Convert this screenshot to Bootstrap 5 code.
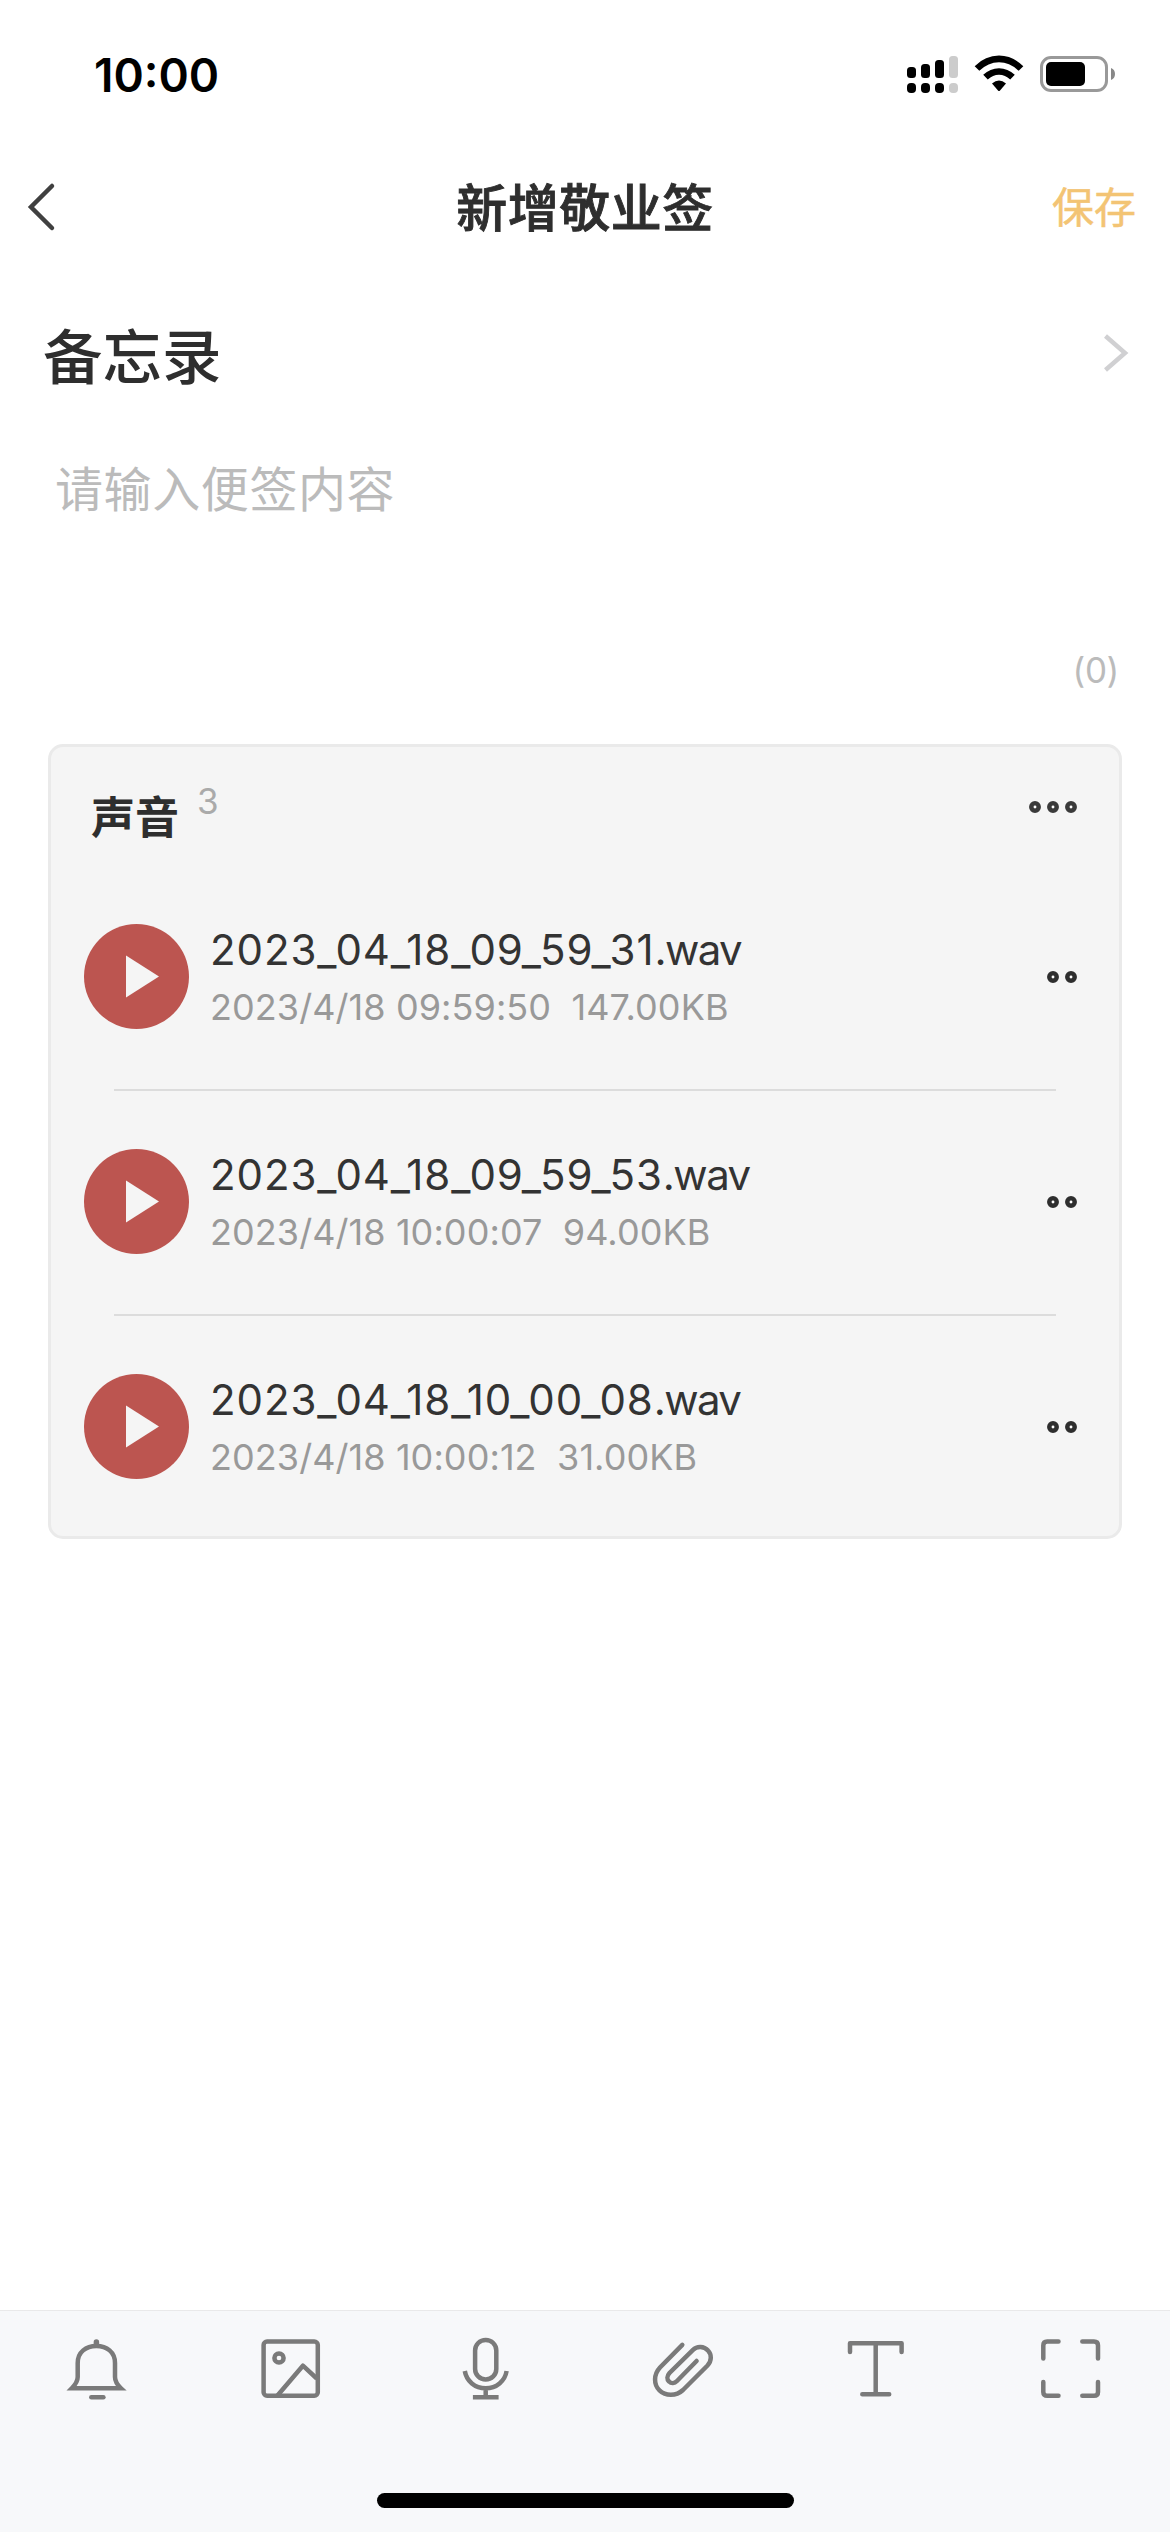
<!DOCTYPE html>
<html lang="zh-CN">
<head>
<meta charset="utf-8">
<meta name="viewport" content="width=device-width, initial-scale=1">
<title>新增敬业签</title>
<link href="https://cdn.jsdelivr.net/npm/bootstrap@5.3.0/dist/css/bootstrap.min.css" rel="stylesheet">
<style>
  body { font-family: Inter, "Noto Sans CJK SC", sans-serif; color: #2e2e2e; }
  .screen { width: 1170px; height: 2532px; line-height: 1; }
  .status-bar { height: 150px; padding: 55px 55px 0 94px; }
  .clock { font-size: 46px; font-weight: 600; line-height: 40px; color: #000; }
  .nav-bar { height: 114px; padding: 0 34px 0 26px; }
  .nav-side { width: 200px; }
  .nav-heading { font-size: 51px; font-weight: 500; line-height: 60px; letter-spacing: .5px; padding-top: 3px; margin-left: 8px; -webkit-text-stroke: .9px #2e2e2e; }
  .save-link { font-size: 42px; color: #f3c474; text-decoration: none; line-height: 50px; -webkit-text-stroke: .5px #f3c474; }
  .save-wrap { padding-top: 2px; }
  .folder-row { height: 178px; padding: 0 40px 0 43px; }
  .folder-name { font-size: 59.5px; font-weight: 500; line-height: 70px; padding-top: 7px; }
  .editor { height: 302px; padding: 18px 51px 0 55px; }
  .hint { font-size: 48px; line-height: 60px; color: #bbb; letter-spacing: .6px; }
  .counter { font-size: 35px; line-height: 40px; color: #bbb; letter-spacing: -.4px; margin-bottom: 54px; }
  .audio-card { margin: 0 48px; height: 795px; background: #f5f5f5; border: 3px solid #eaeaea; border-radius: 15px; }
  .audio-head { height: 117px; padding: 42px 39px 0 40px; }
  .audio-title { font-size: 44px; font-weight: 700; line-height: 54px; padding-top: 2px; }
  .audio-count { font-size: 35px; line-height: 36px; color: #aaa; margin-left: 18px; margin-top: -6px; }
  .audio-row { height: 225px; padding: 0 39px 0 33px; }
  .audio-row + .audio-row { background: linear-gradient(#dcdcdc, #dcdcdc) 63px 0 / 942px 2px no-repeat; }
  .file-name { font-size: 42px; line-height: 50px; color: #333; letter-spacing: .9px; }
  .file-ext { letter-spacing: -1.6px; }
  .file-meta { font-size: 36px; line-height: 44px; color: #999; margin-top: 10px; white-space: pre; letter-spacing: .08px; }
  .file-text { margin-left: 21px; }
  .tool-bar { height: 222px; background: #f7f8fa; border-top: 1px solid #e9e9ea; padding: 24px 0; }
  .tool-bar svg { fill: none; stroke: #7a7a7a; stroke-width: 4.5; }
  .home-bar { width: 417px; height: 15px; border-radius: 8px; background: #000; }
  svg { display: block; flex: none; }
</style>
</head>
<body class="bg-white">
<div class="screen d-flex flex-column">
  <header class="status-bar d-flex justify-content-between align-items-start">
    <div class="clock">10:00</div>
    <svg width="208" height="40" viewBox="907 55 208 40">
      <g><rect x="907" y="67" width="9" height="11" rx="3.5"/><rect x="921" y="64" width="9" height="14" rx="3.5"/><rect x="935" y="60" width="9" height="18" rx="3.5"/>
      <rect x="907" y="83" width="9" height="10" rx="4"/><rect x="921" y="83" width="9" height="10" rx="4"/><rect x="935" y="83" width="9" height="10" rx="4"/></g>
      <g fill="#ccc"><rect x="949" y="56" width="9" height="22" rx="3.5"/><rect x="949" y="83" width="9" height="10" rx="4"/></g>
      <path fill="none" stroke="#000" stroke-width="6.6" d="M977 68.500C990 55.700 1008 55.700 1021 68.500M985.500 77.200C993.500 69.500 1004.500 69.500 1012.500 77.200"/>
      <path d="M992 83.500Q999 77.500 1006 83.500L1000 90.400Q999 91.500 998 90.400Z"/>
      <rect x="1041.500" y="57.500" width="65" height="33" rx="9.500" fill="none" stroke="#999" stroke-width="3"/>
      <rect x="1046" y="62" width="39" height="24" rx="5"/>
      <path fill="#888" d="M1111 68Q1115 69.500 1115 74T1111 80Z"/>
    </svg>
  </header>

  <nav class="nav-bar d-flex align-items-center justify-content-between">
    <div class="nav-side"><svg width="30" height="50" viewBox="0 0 30 50"><path d="M26 4L5 25L26 46" fill="none" stroke="#404040" stroke-width="4.500" stroke-linecap="round"/></svg></div>
    <div class="nav-heading">新增敬业签</div>
    <div class="nav-side save-wrap text-end"><a class="save-link" href="#">保存</a></div>
  </nav>

  <section class="folder-row d-flex align-items-center justify-content-between">
    <div class="folder-name">备忘录</div>
    <svg width="28" height="40" viewBox="0 0 28 40"><path d="M3.500 3L23 20L3.500 37" fill="none" stroke="#d0d0d2" stroke-width="4.500"/></svg>
  </section>

  <section class="editor d-flex flex-column justify-content-between">
    <div class="hint">请输入便签内容</div>
    <div class="counter text-end">(0)</div>
  </section>

  <section class="audio-card">
    <div class="audio-head d-flex align-items-start">
      <div class="audio-title">声音</div>
      <div class="audio-count">3</div>
      <svg class="ms-auto mt-2" width="54" height="20" viewBox="0 0 54 20" fill="#fff" stroke="#3a3a3a" stroke-width="4.500"><circle cx="9" cy="10" r="3.700"/><circle cx="27" cy="10" r="3.700"/><circle cx="45" cy="10" r="3.700"/></svg>
    </div>
    <div class="audio-row d-flex align-items-center">
      <svg width="105" height="105" viewBox="0 0 105 105"><circle cx="52.500" cy="52.500" r="52.500" fill="#bc5550"/><path d="M42 31.500L75 52.500L42 73.500Z" fill="#f5f5f5"/></svg>
      <div class="file-text"><div class="file-name">2023_04_18_09_59_31<span class="file-ext">.wav</span></div><div class="file-meta">2023/4/18 09:59:50  147.00KB</div></div>
      <svg class="ms-auto" width="36" height="20" viewBox="0 0 36 20" fill="#fff" stroke="#2e2e2e" stroke-width="4.500"><circle cx="9" cy="10" r="3.700"/><circle cx="27" cy="10" r="3.700"/></svg>
    </div>
    <div class="audio-row d-flex align-items-center">
      <svg width="105" height="105" viewBox="0 0 105 105"><circle cx="52.500" cy="52.500" r="52.500" fill="#bc5550"/><path d="M42 31.500L75 52.500L42 73.500Z" fill="#f5f5f5"/></svg>
      <div class="file-text"><div class="file-name">2023_04_18_09_59_53<span class="file-ext">.wav</span></div><div class="file-meta">2023/4/18 10:00:07  94.00KB</div></div>
      <svg class="ms-auto" width="36" height="20" viewBox="0 0 36 20" fill="#fff" stroke="#2e2e2e" stroke-width="4.500"><circle cx="9" cy="10" r="3.700"/><circle cx="27" cy="10" r="3.700"/></svg>
    </div>
    <div class="audio-row d-flex align-items-center">
      <svg width="105" height="105" viewBox="0 0 105 105"><circle cx="52.500" cy="52.500" r="52.500" fill="#bc5550"/><path d="M42 31.500L75 52.500L42 73.500Z" fill="#f5f5f5"/></svg>
      <div class="file-text"><div class="file-name">2023_04_18_10_00_08<span class="file-ext">.wav</span></div><div class="file-meta">2023/4/18 10:00:12  31.00KB</div></div>
      <svg class="ms-auto" width="36" height="20" viewBox="0 0 36 20" fill="#fff" stroke="#2e2e2e" stroke-width="4.500"><circle cx="9" cy="10" r="3.700"/><circle cx="27" cy="10" r="3.700"/></svg>
    </div>
  </section>

  <footer class="tool-bar mt-auto d-flex flex-column justify-content-between align-items-center">
    <div class="row g-0 w-100">
      <div class="col-2 d-flex justify-content-center">
        <svg width="71" height="71" viewBox="0 0 71 71"><path d="M15.700 28C15.700 17 24 11 34.400 11S53 17 53 28V42C53 46 55.500 50 59 53.300H9.800C13 50 15.700 46 15.700 42Z"/><path stroke-width="5.500" stroke-linecap="round" d="M34.400 7V10"/><path stroke-linecap="round" d="M29.300 62.300H41.400"/></svg>
      </div>
      <div class="col-2 d-flex justify-content-center">
        <svg width="71" height="71" viewBox="0 0 71 71"><rect x="6.600" y="6.600" width="54.200" height="54.200" rx="3.500"/><circle cx="22" cy="23" r="4.600"/><path stroke-linejoin="round" d="M20.500 60.500L45.900 30.700L59.800 43.500"/></svg>
      </div>
      <div class="col-2 d-flex justify-content-center">
        <svg width="71" height="71" viewBox="0 0 71 71"><rect x="23.100" y="4.900" width="21.200" height="39.600" rx="10.600"/><path d="M12.800 36C14.500 46 23 53.300 33.700 53.300S53 46 54.600 36M33.700 53V62M20.900 62.300H46.600"/></svg>
      </div>
      <div class="col-2 d-flex justify-content-center">
        <svg width="71" height="71" viewBox="0 0 71 71"><path stroke-linecap="round" d="M35.300 9.800L13 32.500C6.500 39.500 6.500 49.500 12.500 55.400C18.500 61.300 29 61.500 36 55L60.500 30.500C64.800 26 64.800 19.500 61 15.500C57 11 50 10.800 46 14.800L22.500 38C19.800 41 19.800 44.500 22 46.500C24.300 48.800 27.500 48.500 30 46L49.600 26"/></svg>
      </div>
      <div class="col-2 d-flex justify-content-center">
        <svg width="71" height="71" viewBox="0 0 71 71"><path stroke-linecap="round" stroke-linejoin="round" d="M8 17V8.300H59.600V17M33.700 8.300V59.300M20.300 59.300H47.200"/></svg>
      </div>
      <div class="col-2 d-flex justify-content-center">
        <svg width="71" height="71" viewBox="0 0 71 71"><path stroke-linecap="round" d="M6.300 23.500V10.500Q6.300 6.600 10.200 6.600H21.500M45.300 6.600H57Q61 6.600 61 10.500V23.500M61 47V57Q61 60.800 57 60.800H45.300M21.500 60.800H10.200Q6.300 60.800 6.300 57V47"/></svg>
      </div>
    </div>
    <div class="home-bar"></div>
  </footer>
</div>
<script src="https://cdn.jsdelivr.net/npm/bootstrap@5.3.0/dist/js/bootstrap.bundle.min.js"></script>
</body>
</html>
